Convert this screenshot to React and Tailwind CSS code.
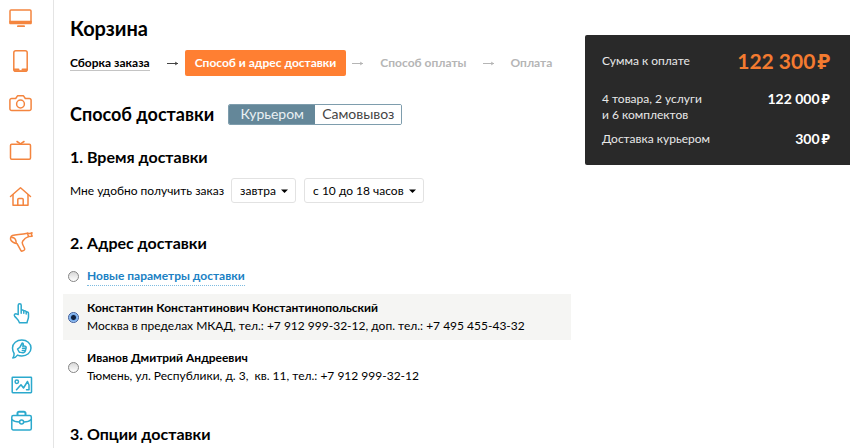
import { useState } from "react";
import { clsx } from "clsx";

const catalog = [
  {
    name: "Компьютеры",
    height: 18,
    path: (
      <>
        <rect x="1" y="1" width="21" height="13" rx="1" />
        <path d="M1 12.5h21v2H1z" fill="currentColor" />
        <path d="M9 17.2h6" strokeWidth="2" />
      </>
    ),
  },
  {
    name: "Телефоны",
    height: 24,
    path: (
      <>
        <rect x="4.800" y="1.700" width="13.400" height="20.600" rx="2" />
        <path d="M5 20.500h4.500M13.500 20.500H18" strokeWidth="2" />
        <path d="M5.500 22h12" />
      </>
    ),
  },
  {
    name: "Фото",
    height: 20,
    path: (
      <>
        <path d="M2.700 3.500h4L8.500 .8h6l1.800 2.700h4a1.800 1.800 0 0 1 1.800 1.800v8.400a1.800 1.800 0 0 1-1.800 1.800H2.700a1.800 1.800 0 0 1-1.800-1.800V5.300a1.800 1.800 0 0 1 1.800-1.800z" />
        <circle cx="11.500" cy="9" r="3.900" />
      </>
    ),
  },
  {
    name: "Телевизоры",
    height: 24,
    path: (
      <>
        <rect x="1.500" y="7.300" width="20" height="15" rx="1.200" />
        <path d="M8 4.500l3.500 2.300L15 4.500" />
      </>
    ),
  },
  {
    name: "Для дома",
    height: 24,
    path: (
      <>
        <path d="M1.500 13.500L11.500 4.800 21.500 13.500" />
        <path d="M4 11.800v10.500h15V11.800" />
        <path d="M8.800 22v-5.500a1 1 0 0 1 1-1h3.400a1 1 0 0 1 1 1V22" />
      </>
    ),
  },
  {
    name: "Красота",
    height: 24,
    path: (
      <>
        <path d="M3.500 6.500C7 4.800 11 6 18.500 4.200l1 3.400c-2.500.8-4.200 2.200-5.700 4.400-.7 1-.8 2-.2 3.200l2 4.300c.3.800 0 1.400-.7 1.800l-1.200.6c-.8.4-1.500.1-1.900-.6l-3.600-6.500C5.500 14 3.200 13.500 2 11.300 1 9.500 1.500 7.500 3.500 6.500z" />
        <path d="M2.800 8.500c2.400 0 4.200 2 4.400 5" />
        <path d="M18.500 4.200l2 .4 2.500-.8-.6 1.900.8 1.500-3.700.4" />
      </>
    ),
  },
];

const services = [
  {
    name: "Выбор",
    height: 24,
    path: (
      <path d="M9.200 13.500V4.200a1.500 1.500 0 0 1 3 0v5.300c.8-.7 2.200-.5 2.600.5 1-.5 2.100 0 2.400.9 1.200-.3 2.300.5 2.300 1.700v3.500c0 2.200-1.200 2.800-1.500 5.700h-7.500c-.5-2.500-3-4.200-4.800-6.500-1.300-1.800.9-3.300 2.200-2.200zM12.200 9.300v3M14.800 10v2.300M17.200 10.900v2" />
    ),
  },
  {
    name: "Отзывы",
    height: 24,
    path: (
      <>
        <path d="M12.800 3c5 0 9.200 3.300 9.200 8s-4.200 8-9.200 8c-1.500 0-3-.3-4.300-.9-1.200 1.700-3 2.900-4.700 2.900 1-1.200 1.400-2.800 1.300-4.500C4.200 15 3.500 13.200 3.500 11c0-4.700 4.300-8 9.300-8z" />
        <path d="M8.500 12l2.300-1.700 2.500-4.300c1.300 0 1.200 1.500.5 3.200 2.500-.3 3.800.2 3.300 1.500-.4 2-.7 4.800-2.800 5-2 .2-3-.7-4-.5z" />
        <path d="M13.500 11.300h3M13.300 13.500h2.800" />
      </>
    ),
  },
  {
    name: "Галерея",
    height: 24,
    path: (
      <>
        <rect x="3.200" y="4.200" width="19.300" height="15.500" rx=".6" />
        <circle cx="7.800" cy="8.800" r="1.700" />
        <path d="M7.500 16.800l4.500-5 2.500 3.200 4-6.500 1.500 3.500v4.800h-2.500" />
      </>
    ),
  },
  {
    name: "Бизнес",
    height: 24,
    path: (
      <>
        <rect x="2.800" y="6.500" width="19.500" height="14.500" rx="1.500" />
        <path d="M8.500 6V4.200A1.500 1.500 0 0 1 10 2.700h5a1.500 1.500 0 0 1 1.500 1.500V6" strokeWidth="2" />
        <path d="M2.800 10.500c2 2 4.500 2.500 7.500 2.500M15 13c3 0 5.300-.5 7.300-2.500" />
        <circle cx="12.600" cy="13" r="2" />
      </>
    ),
  },
];

const addresses = [
  {
    id: "moscow",
    name: "Константин Константинович Константинопольский",
    details: "Москва в пределах МКАД, тел.: +7 912 999-32-12, доп. тел.: +7 495 455-43-32",
  },
  {
    id: "tyumen",
    name: "Иванов Дмитрий Андреевич",
    details: "Тюмень, ул. Республики, д. 3,  кв. 11, тел.: +7 912 999-32-12",
  },
];

function IconLink({ item }) {
  return (
    <a href="#" aria-label={item.name} className="block">
      <svg
        width="25"
        height={item.height}
        viewBox={`0 0 25 ${item.height}`}
        fill="none"
        stroke="currentColor"
        strokeWidth="1.5"
        strokeLinecap="round"
        strokeLinejoin="round"
      >
        {item.path}
      </svg>
    </a>
  );
}

function Arrow({ className }) {
  return (
    <svg width="12" height="8" viewBox="0 0 12 8" fill="none" stroke="currentColor" className={clsx("shrink-0", className)}>
      <path d="M0 4.500h11" />
      <path d="M8.500 3l2 1.500-2 1.500z" fill="currentColor" strokeWidth=".5" />
    </svg>
  );
}

function Dropdown({ label, options, className }) {
  return (
    <div className="relative">
      <select
        aria-label={label}
        className={clsx("block h-[25px] appearance-none rounded-[3px] border border-[#e2e2e2] bg-white pl-2 text-[12px]", className)}
      >
        {options.map((option) => (
          <option key={option}>{option}</option>
        ))}
      </select>
      <svg width="7" height="4" viewBox="0 0 7 4" className="pointer-events-none absolute right-2 top-[11px]">
        <path d="M0 .5h7L3.500 4z" />
      </svg>
    </div>
  );
}

function Radio({ id, value, checked, onChange }) {
  return (
    <input
      id={id}
      type="radio"
      name="address"
      checked={checked}
      onChange={() => onChange(value)}
      className="size-[11px] shrink-0 appearance-none rounded-full border border-[#858585] bg-linear-to-b from-[#d8d8d8] to-white checked:border-[#38599b] checked:bg-[radial-gradient(circle,#10203c_0_2px,#6fa5e8_3px,#b4dcff_5px)]"
    />
  );
}

function Price({ amount, className }) {
  return (
    <span className={clsx("flex gap-[2px] whitespace-nowrap font-bold", className)}>
      <span>{amount}</span>
      <span>₽</span>
    </span>
  );
}

export default function App() {
  const [method, setMethod] = useState("Курьером");
  const [address, setAddress] = useState("moscow");

  return (
    <div className="flex min-h-screen items-start bg-white font-[Lato,'Noto_Sans',sans-serif] text-[12px] leading-[18px] text-black">
      {/* Sidebar */}
      <nav className="flex w-[54px] shrink-0 flex-col gap-12 self-stretch border-r border-[#e4e4e4] pl-[9px] pt-[9px]">
        <div className="flex flex-col gap-[22px] text-[#f4853f]">
          {catalog.map((item) => (
            <IconLink key={item.name} item={item} />
          ))}
        </div>
        <div className="flex flex-col gap-3 text-[#2ba9cd]">
          {services.map((item) => (
            <IconLink key={item.name} item={item} />
          ))}
        </div>
      </nav>

      <main className="min-w-0 flex-1 pl-[9px] pr-[14px] pt-4">
        <div className="px-[7px]">
          <h1 className="text-[20px] font-bold leading-6">Корзина</h1>

          {/* Checkout steps */}
          <ol className="mt-[10px] flex items-center whitespace-nowrap font-bold text-[#b5b5b5]">
            <li>
              <a href="#" className="border-b border-[#c4c4c4] text-black">
                Сборка заказа
              </a>
            </li>
            <Arrow className="ml-[17px] mr-[6px] text-[#444]" />
            <li aria-current="step" className="rounded-[2px] bg-[#ff7f32] px-[10px] py-1 text-white">
              Способ и адрес доставки
            </li>
            <Arrow className="ml-[6px] mr-4" />
            <li>Способ оплаты</li>
            <Arrow className="mx-4" />
            <li>Оплата</li>
          </ol>

          {/* Delivery method */}
          <div className="mt-[26px] flex items-center gap-[14px]">
            <h2 className="text-[18px] font-bold leading-6">Способ доставки</h2>
            <div className="flex h-[21px] overflow-hidden rounded-[2px] border border-[#7e9dad] text-[14px] leading-[18px]">
              {["Курьером", "Самовывоз"].map((title) => (
                <button
                  key={title}
                  type="button"
                  aria-pressed={method === title}
                  onClick={() => setMethod(title)}
                  className={clsx("w-[86px]", method === title ? "bg-[#648799] text-[#e9f0f3]" : "bg-white text-[#444]")}
                >
                  {title}
                </button>
              ))}
            </div>
          </div>

          <h3 className="mt-[19px] text-[16px] font-bold leading-6">1. Время доставки</h3>
          <div className="mt-[9px] flex items-center whitespace-nowrap">
            <span className="mr-[7px]">Мне удобно получить заказ</span>
            <div className="flex gap-2">
              <Dropdown label="День" options={["завтра", "сегодня"]} className="w-[65px]" />
              <Dropdown label="Время" options={["с 10 до 18 часов", "с 18 до 22 часов"]} className="w-[120px]" />
            </div>
          </div>

          <h3 className="mt-7 text-[16px] font-bold leading-6">2. Адрес доставки</h3>
        </div>

        {/* Addresses */}
        <div className="mt-3 flex items-center gap-2 px-[5px]">
          <Radio id="new" value="new" checked={address === "new"} onChange={setAddress} />
          <label htmlFor="new" className="border-b border-dotted border-[#7dbbe0] font-bold text-[#1b81c4]">
            Новые параметры доставки
          </label>
        </div>
        <div className="mt-2 flex flex-col gap-1">
          {addresses.map(({ id, name, details }) => (
            <div key={id} className={clsx("flex items-center gap-2 px-[5px] py-[5px]", address === id && "bg-[#f5f5f3]")}>
              <Radio id={id} value={id} checked={address === id} onChange={setAddress} />
              <label htmlFor={id} className="whitespace-pre">
                <span className="block font-bold">{name}</span>
                <span className="block">{details}</span>
              </label>
            </div>
          ))}
        </div>

        <h3 className="mt-8 px-[7px] text-[16px] font-bold leading-6">3. Опции доставки</h3>
      </main>

      {/* Order total */}
      <aside className="mt-[35px] w-[265px] shrink-0 rounded-l-[2px] bg-[#292929] pb-[18px] pl-[17px] pr-5 pt-3 leading-4 text-[#e8e8e8]">
        <div className="flex items-center justify-between">
          <span>Сумма к оплате</span>
          <Price amount="122 300" className="text-[21px] leading-7 text-[#f47b30]" />
        </div>
        <div className="mt-4 flex items-start justify-between">
          <span>
            4 товара, 2 услуги
            <br />и 6 комплектов
          </span>
          <Price amount="122 000" className="text-[14px] text-white" />
        </div>
        <div className="mt-2 flex items-center justify-between">
          <span>Доставка курьером</span>
          <Price amount="300" className="text-[14px] text-white" />
        </div>
      </aside>
    </div>
  );
}
